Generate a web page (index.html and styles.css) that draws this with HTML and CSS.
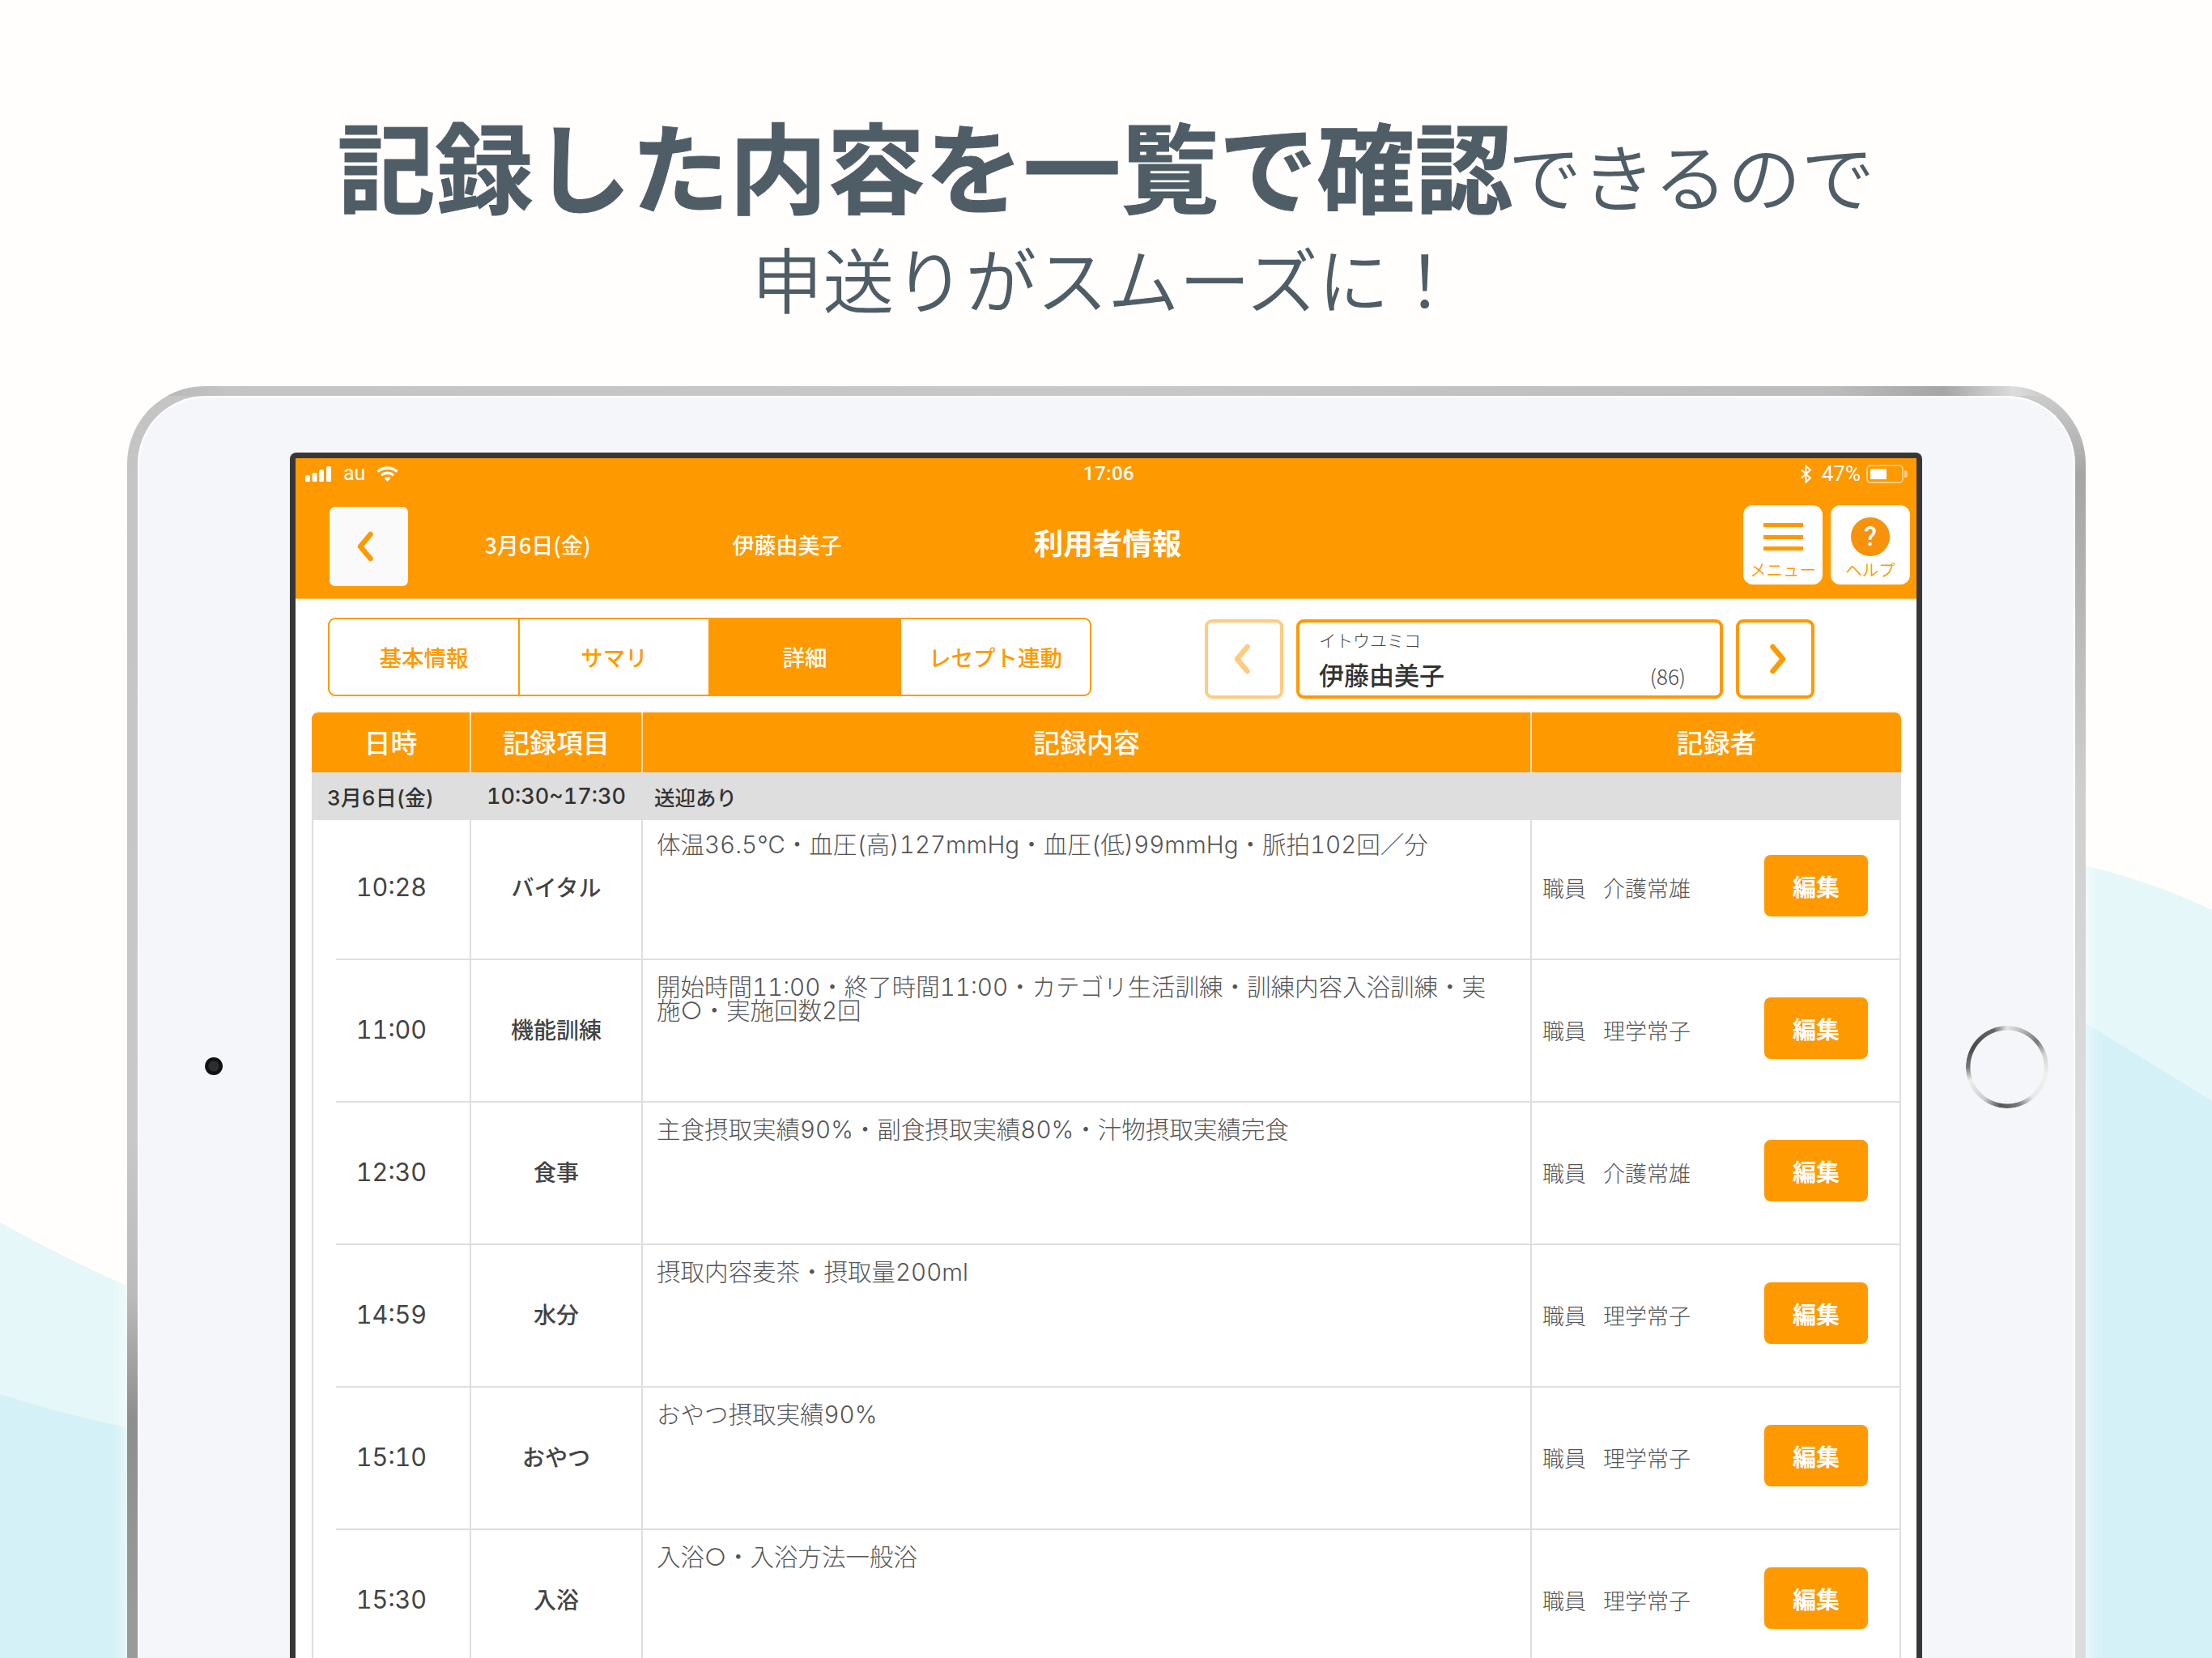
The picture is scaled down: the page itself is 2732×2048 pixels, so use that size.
FILE: index.html
```html
<!DOCTYPE html>
<html lang="ja">
<head>
<meta charset="utf-8">
<title>利用者情報</title>
<link rel="stylesheet" href="styles.css">
</head>
<body>
<svg class="waves" viewBox="0 0 2732 2048" width="2732" height="2048" aria-hidden="true">
  <path class="wave-light" d="M0 1510 Q80 1555 170 1594 V2048 H0Z"/>
  <path class="wave-dark" d="M0 1722 Q80 1748 170 1766 V2048 H0Z"/>
  <path class="wave-light" d="M2560 1066 Q2650 1085 2732 1124 V2048 H2560Z"/>
  <path class="wave-dark" d="M2560 1254 L2732 1360 V2048 H2560Z"/>
</svg>
<main class="page">
  <header class="headline">
    <h1 class="headline-main"><strong class="headline-strong">記録した内容を一覧で確認</strong><span class="headline-light">できるので</span></h1>
    <p class="headline-sub">申送りがスムーズに！</p>
  </header>
  <section class="device">
    <div class="device-face">
      <span class="camera"></span>
      <span class="home"></span>
      <div class="screen">
        <div class="appbar">
          <div class="status">
            <div class="status-left">
              <svg class="signal" width="32" height="19" viewBox="0 0 32 19"><rect x="0" y="11" width="6" height="8" rx="1.5"/><rect x="8.5" y="8" width="6" height="11" rx="1.5"/><rect x="17" y="4" width="6" height="15" rx="1.5"/><rect x="26" y="0" width="6" height="19" rx="1.5"/></svg>
              <span class="carrier">au</span>
              <svg class="wifi" width="27" height="19" viewBox="0 0 27 19"><path class="wifi-arc" d="M1.5 6.5C8.5 .5 18.5 .5 25.5 6.5"/><path class="wifi-arc" d="M6 11C10.500 7.300 16.500 7.300 21 11"/><path class="wifi-dot" d="M13.500 19L9.500 14.500C12 12.600 15 12.600 17.500 14.500Z"/></svg>
            </div>
            <div class="status-time">17:06</div>
            <div class="status-right">
              <svg class="bt" width="15" height="23" viewBox="0 0 15 23"><path d="M2 6.500L13 16.500L7.500 21.500V1.500L13 6.500L2 16.500"/></svg>
              <span class="percent">47%</span>
              <span class="battery"><span class="battery-fill"></span></span>
              <span class="battery-nub"></span>
            </div>
          </div>
          <nav class="navbar">
            <button class="back-btn"><svg width="22" height="38" viewBox="0 0 22 38"><path class="chev" d="M17.500 4L5 19L17.500 34"/></svg></button>
            <div class="nav-date">3月6日(金)</div>
            <div class="nav-name">伊藤由美子</div>
            <div class="nav-title">利用者情報</div>
            <div class="nav-actions">
              <button class="nav-tool nav-menu">
                <svg width="49" height="34" viewBox="0 0 49 34"><rect y="0" width="49" height="5"/><rect y="15" width="49" height="5"/><rect y="29" width="49" height="5"/></svg>
                <span class="tool-label">メニュー</span>
              </button>
              <button class="nav-tool nav-help">
                <span class="help-circle">?</span>
                <span class="tool-label tool-label-help">ヘルプ</span>
              </button>
            </div>
          </nav>
        </div>
        <div class="toolbar">
          <div class="tabs">
            <div class="tab">基本情報</div>
            <div class="tab tab-second">サマリ</div>
            <div class="tab tab-active">詳細</div>
            <div class="tab">レセプト連動</div>
          </div>
          <div class="pager">
            <button class="pager-btn pager-prev"><svg width="22" height="38" viewBox="0 0 22 38"><path class="chev" d="M17.500 4L5 19L17.500 34"/></svg></button>
            <div class="person">
              <div class="person-kana">イトウユミコ</div>
              <div class="person-line"><span class="person-name">伊藤由美子</span><span class="person-age">(86)</span></div>
            </div>
            <button class="pager-btn pager-next"><svg width="22" height="38" viewBox="0 0 22 38"><path class="chev" d="M4.500 4L17 19L4.500 34"/></svg></button>
          </div>
        </div>
        <div class="table">
          <div class="thead">
            <div class="th">日時</div>
            <div class="th">記録項目</div>
            <div class="th">記録内容</div>
            <div class="th">記録者</div>
          </div>
          <div class="group">
            <div class="group-date">3月6日(金)</div>
            <div class="group-time">10:30~17:30</div>
            <div class="group-note">送迎あり</div>
          </div>
          <div class="row row-first">
            <div class="cell-time">10:28</div>
            <div class="cell-item">バイタル</div>
            <div class="cell-body">体温36.5℃・血圧(高)127mmHg・血圧(低)99mmHg・脈拍102回／分</div>
            <div class="cell-staff"><span class="staff-role">職員</span><span>介護常雄</span><button class="edit-btn">編集</button></div>
          </div>
          <div class="row">
            <div class="cell-time">11:00</div>
            <div class="cell-item">機能訓練</div>
            <div class="cell-body">開始時間11:00・終了時間11:00・カテゴリ生活訓練・訓練内容入浴訓練・実施○・実施回数2回</div>
            <div class="cell-staff"><span class="staff-role">職員</span><span>理学常子</span><button class="edit-btn">編集</button></div>
          </div>
          <div class="row">
            <div class="cell-time">12:30</div>
            <div class="cell-item">食事</div>
            <div class="cell-body">主食摂取実績90%・副食摂取実績80%・汁物摂取実績完食</div>
            <div class="cell-staff"><span class="staff-role">職員</span><span>介護常雄</span><button class="edit-btn">編集</button></div>
          </div>
          <div class="row">
            <div class="cell-time">14:59</div>
            <div class="cell-item">水分</div>
            <div class="cell-body">摂取内容麦茶・摂取量200ml</div>
            <div class="cell-staff"><span class="staff-role">職員</span><span>理学常子</span><button class="edit-btn">編集</button></div>
          </div>
          <div class="row">
            <div class="cell-time">15:10</div>
            <div class="cell-item">おやつ</div>
            <div class="cell-body">おやつ摂取実績90%</div>
            <div class="cell-staff"><span class="staff-role">職員</span><span>理学常子</span><button class="edit-btn">編集</button></div>
          </div>
          <div class="row">
            <div class="cell-time">15:30</div>
            <div class="cell-item">入浴</div>
            <div class="cell-body">入浴○・入浴方法一般浴</div>
            <div class="cell-staff"><span class="staff-role">職員</span><span>理学常子</span><button class="edit-btn">編集</button></div>
          </div>
        </div>
      </div>
    </div>
  </section>
</main>
</body>
</html>
```
FILE: styles.css
```css
* { box-sizing: border-box; }
html, body { margin: 0; height: 2048px; overflow: hidden; }
body {
  position: relative;
  width: 2732px;
  background: #fffefc;
  color: #333;
  font-family: "Inter", "Noto Sans CJK JP", sans-serif;
  font-variant-numeric: tabular-nums;
}
button { font-family: inherit; padding: 0; border: 0; }

.waves { position: absolute; left: 0; top: 0; }
.wave-light { fill: #e5f7f8; }
.wave-dark { fill: #d4f1f7; }

.page { position: relative; }

.headline { height: 477px; padding-top: 122px; text-align: center; color: #4f5d66; font-family: "Noto Sans CJK JP", sans-serif; }
.headline-main { margin: 0; height: 160px; line-height: 160px; font-size: 91px; font-weight: 350; white-space: nowrap; }
.headline-strong { font-size: 121px; font-weight: 700; -webkit-text-stroke: 1px #4f5d66; }
.headline-light { font-weight: 350; margin-left: -6px; }
.headline-sub { margin: 10px 0 0; font-size: 88px; line-height: 100px; font-weight: 350; }

.device {
  position: relative;
  width: 2419px;
  height: 1700px;
  margin-left: 157px;
  padding: 12px 13px 0;
  border-radius: 96px 96px 0 0;
  background:
    linear-gradient(90deg, #b0b0b0 0, #c4c4c4 120px, #c8c8c8 1200px, #bdbdbd 2100px, #a5a5a5 2243px, #dcdcdc 2330px, #b5b5b5 2419px) left top / 100% 12px no-repeat,
    linear-gradient(180deg, #c4c4c4 0, #c8c8c8 923px, #bbb 1123px, #8e8e8e 1273px, #9a9a9a 1523px) left top / 50% 100% no-repeat,
    linear-gradient(180deg, #d0d0d0 0, #a5a5a5 110px, #cfcfcf 500px, #dcdcdc 900px) right top / 50% 100% no-repeat;
  box-shadow: 0 0 20px 4px rgba(255, 255, 255, .7);
}
.device-face {
  position: relative;
  height: 100%;
  padding: 68px 0 0 186px;
  border: 2px solid #fff;
  border-bottom: 0;
  border-radius: 84px 84px 0 0;
  background: #f4f6f9;
}
.camera {
  position: absolute;
  left: 81px;
  top: 815px;
  width: 22px;
  height: 22px;
  border-radius: 50%;
  background: radial-gradient(circle, #2a2f33 0 6px, #111 7px 11px);
}
.home {
  position: absolute;
  left: 2256px;
  top: 776px;
  width: 102px;
  height: 102px;
  border-radius: 50%;
  background: conic-gradient(#e6e6e6 0deg, #bbb 20deg, #777 50deg, #cfcfcf 70deg, #f0f0f0 100deg, #e8e8e8 140deg, #777 165deg, #555 190deg, #ccc 215deg, #eee 250deg, #777 270deg, #4a4a4a 300deg, #666 340deg, #e6e6e6 360deg);
  -webkit-mask: radial-gradient(circle, transparent 0 45px, #000 46px 51px);
  mask: radial-gradient(circle, transparent 0 45px, #000 46px 51px);
}
.screen {
  width: 2016px;
  height: 1600px;
  border: 7px solid #373737;
  border-bottom: 0;
  border-radius: 8px 8px 0 0;
  background: #fff;
  box-shadow: 0 -1px 0 #fff;
}

.appbar { height: 174px; background: #ff9900; color: #fff; border-bottom: 1px solid #ffc166; }
.status { display: grid; grid-template-columns: 1fr auto 1fr; align-items: center; height: 38px; padding: 0 11px 0 12px; }
.status-left { display: flex; align-items: center; gap: 15px; }
.signal { fill: #fff; }
.carrier { font-family: "Roboto", sans-serif; font-size: 25px; line-height: 24px; font-weight: 400; margin-right: -1px; }
.wifi-arc { fill: none; stroke: #fff; stroke-width: 3.4; }
.wifi-dot { fill: #fff; }
.status-time { font-family: "Roboto", sans-serif; font-size: 24px; font-weight: 500; letter-spacing: .5px; padding-left: 6px; }
.status-right { display: flex; align-items: center; justify-content: flex-end; }
.bt { fill: none; stroke: #fff; stroke-width: 2; margin-right: 12px; }
.percent { font-family: "Roboto", sans-serif; font-size: 26px; font-weight: 400; margin-right: 7px; }
.battery { width: 46px; height: 23px; padding: 3px; border: 2px solid rgba(255, 255, 255, .5); border-radius: 5px; }
.battery-fill { display: block; width: 20px; height: 100%; background: #fff; border-radius: 1px; }
.battery-nub { width: 4px; height: 9px; margin-left: 1px; background: rgba(255, 255, 255, .5); border-radius: 0 3px 3px 0; }

.navbar { display: flex; align-items: flex-start; padding: 20px 8px 0 42px; }
.back-btn {
  display: flex; align-items: center; padding-left: 33px;
  width: 97px; height: 98px; margin-top: 2px;
  border-radius: 7px; background: #fafafa;
}
.chev { fill: none; stroke: #ff9900; stroke-width: 6.5; stroke-linecap: round; stroke-linejoin: round; }
.nav-date, .nav-name { height: 98px; line-height: 98px; text-align: center; font-family: "Noto Sans CJK JP", sans-serif; font-size: 27px; font-weight: 500; }
.nav-date { width: 320px; }
.nav-name { width: 296px; }
.nav-title { width: 496px; height: 98px; line-height: 92px; text-align: center; font-family: "Noto Sans CJK JP", sans-serif; font-size: 36.500px; font-weight: 700; }
.nav-actions { display: flex; gap: 10px; margin-left: auto; }
.nav-tool { display: flex; flex-direction: column; align-items: center; width: 98px; height: 98px; border-radius: 12px; background: #fff; fill: #ff9900; }
.nav-menu { padding-top: 22px; }
.nav-help { padding-top: 15px; }
.tool-label { margin-top: 11px; height: 24px; line-height: 24px; color: #ff9900; font-family: "Noto Sans CJK JP", sans-serif; font-size: 20.500px; font-weight: 350; white-space: nowrap; }
.tool-label-help { margin-top: 4px; }
.help-circle { width: 48px; height: 48px; line-height: 48px; text-align: center; border-radius: 50%; background: #f8920a; color: #fff; font-family: "Roboto", sans-serif; font-size: 33px; font-weight: 500; }

.toolbar { display: flex; align-items: flex-start; height: 140px; padding: 23px 0 0 40px; }
.tabs { display: grid; grid-template-columns: 233px 235px 238px 1fr; width: 943px; height: 97px; overflow: hidden; border: 2px solid #ff9900; border-radius: 9px; color: #ff9900; }
.tab { display: flex; align-items: center; justify-content: center; padding-bottom: 2px; font-family: "Noto Sans CJK JP", sans-serif; font-size: 27.500px; font-weight: 500; }
.tab-second { border-left: 2px solid #ff9900; }
.tab-active { background: #ff9900; color: #fff; }
.pager { display: flex; gap: 16px; margin: 2px 0 0 140px; }
.pager-btn { display: flex; align-items: center; justify-content: center; width: 97px; height: 98px; border: 4px solid #ff9900; border-radius: 9px; background: #fff; }
.pager-prev { opacity: .5; padding-right: 6px; }
.pager-next { padding-left: 6px; }
.person { width: 527px; height: 98px; padding: 8px 42px 0 24px; border: 4px solid #ff9900; border-radius: 9px; background: #fff; font-family: "Noto Sans CJK JP", sans-serif; }
.person-kana { font-size: 21px; line-height: 26px; font-weight: 300; color: #444; }
.person-line { display: flex; align-items: baseline; justify-content: space-between; margin-top: 9px; line-height: 42px; }
.person-name { font-size: 31px; font-weight: 500; }
.person-age { font-size: 26px; font-weight: 300; color: #444; }

.table { margin-left: 20px; width: 1963px; }
.thead, .group { display: grid; grid-template-columns: 195px 212px 1098px 458px; }
.row { display: grid; grid-template-columns: 193px 212px 1098px 456px; }
.thead { height: 74px; border-radius: 8px 8px 0 0; background: #ff9900; color: #fff; }
.th { display: flex; align-items: center; justify-content: center; padding-bottom: 2px; font-family: "Noto Sans CJK JP", sans-serif; font-size: 33px; font-weight: 500; border-left: 2px solid #ffe0b0; }
.th:first-child { border-left: 0; }
.group { position: relative; z-index: 1; height: 59px; align-items: center; background: #dedede; font-size: 27px; font-weight: 500; color: #333; }
.group-date { padding-left: 19px; font-size: 26px; }
.group-time { padding-left: 21px; }
.group-note { padding-left: 16px; font-size: 25.500px; }

.row {
  height: 176px;
  background: linear-gradient(#dddee0, #dddee0) right bottom / calc(100% - 28px) 2px no-repeat;
  border-left: 2px solid #dddee0;
  border-right: 2px solid #dddee0;
  color: #444;
}
.row-first { margin-top: -3px; }
.cell-time, .cell-item { display: flex; align-items: center; justify-content: center; padding-bottom: 6px; }
.cell-time { font-size: 30.500px; font-weight: 400; }
.cell-item { border-left: 2px solid #dddee0; font-size: 28px; font-weight: 500; font-family: "Noto Sans CJK JP", sans-serif; }
.cell-body { padding: 19px 40px 0 17px; border-left: 2px solid #dddee0; font-size: 29.500px; line-height: 28.500px; font-weight: 300; color: #555; }
.cell-staff { display: flex; align-items: center; gap: 21px; padding: 0 39px 3px 13px; border-left: 2px solid #dddee0; font-family: "Noto Sans CJK JP", sans-serif; font-size: 27px; font-weight: 300; color: #555; }
.edit-btn { width: 128px; height: 76px; margin: 0 0 5px auto; border-radius: 8px; background: #ff9900; color: #fff; font-family: "Noto Sans CJK JP", sans-serif; font-size: 29px; font-weight: 700; }
```
